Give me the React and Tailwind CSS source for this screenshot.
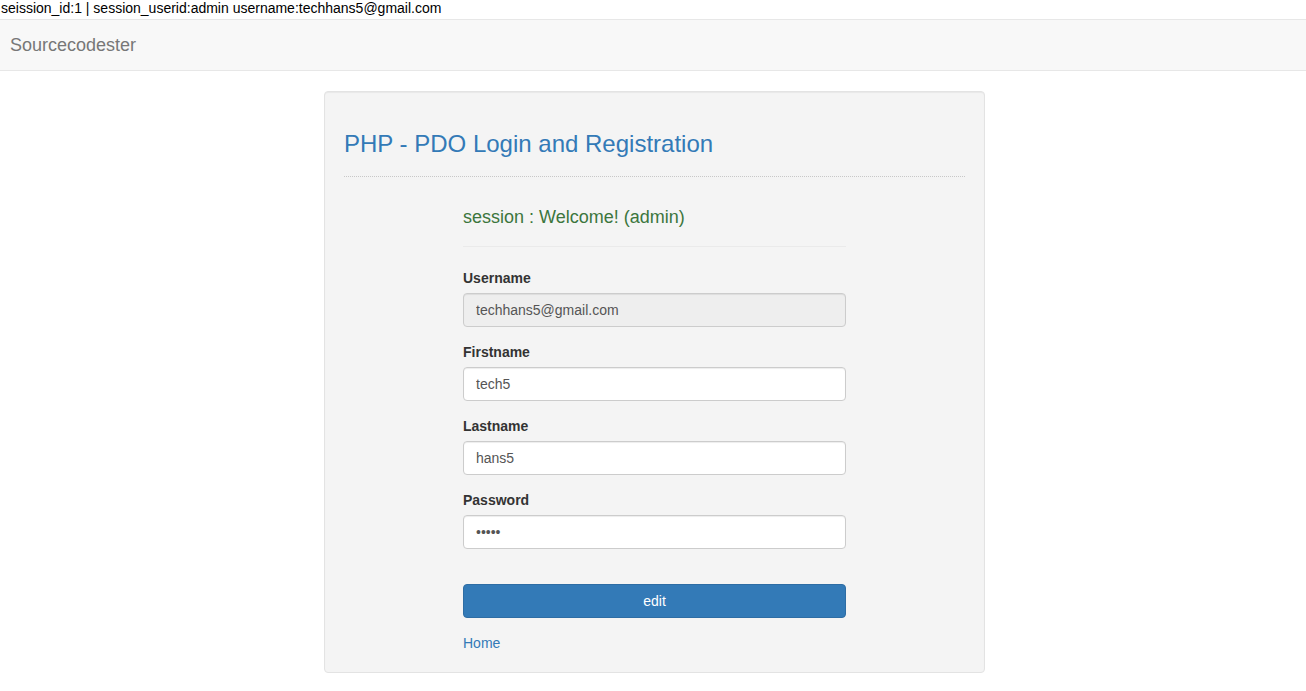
import React from 'react';

const inputBase =
  'block w-full h-[34px] px-3 text-[14px] text-[#555] border border-[#ccc] rounded-[4px] shadow-[inset_0_1px_1px_rgba(0,0,0,0.075)] outline-none';

function Field({ label, children }) {
  return (
    <div className="mb-[15px]">
      <label className="block mb-[5px] text-[14px] leading-[20px] font-bold text-[#333]">{label}</label>
      {children}
    </div>
  );
}

export default function App() {
  return (
    <div className="min-h-screen bg-white font-['Liberation_Sans',Arial,sans-serif] text-[14px] text-[#333]">
      {/* session debug line */}
      <div className="h-[19px] leading-[17px] pl-[1px] text-black">
        seission_id:1 | session_userid:admin username:techhans5@gmail.com
      </div>

      {/* navbar */}
      <nav className="h-[52px] bg-[#f8f8f8] border-y border-[#e7e7e7] flex items-center">
        <span className="pl-[10px] text-[18px] leading-[20px] text-[#777]">Sourcecodester</span>
      </nav>

      {/* well */}
      <div className="mt-[20px] ml-[324px] w-[661px] bg-[#f4f4f4] border border-[#e3e3e3] rounded-[4px] shadow-[inset_0_1px_1px_rgba(0,0,0,0.05)] p-[19px]">
        <h3 className="mt-[20px] text-[24px] leading-[26px] text-[#337ab7]">PHP - PDO Login and Registration</h3>
        <hr className="mt-[19px] border-0 border-t border-dotted border-[#c8c8c8]" />

        <div className="mx-[119px] pt-[30px]">
          <h4 className="text-[18px] leading-[20px] text-[#3c763d]">session : Welcome! (admin)</h4>
          <hr className="mt-[19px] mb-[21px] border-0 border-t border-[#eaeaea]" />

          <Field label="Username">
            <input className={inputBase + ' bg-[#eee]'} defaultValue="techhans5@gmail.com" readOnly />
          </Field>
          <Field label="Firstname">
            <input className={inputBase + ' bg-white'} defaultValue="tech5" />
          </Field>
          <Field label="Lastname">
            <input className={inputBase + ' bg-white'} defaultValue="hans5" />
          </Field>
          <Field label="Password">
            <input type="password" className={inputBase + ' bg-white'} defaultValue="hans5" />
          </Field>

          <button className="mt-[20px] w-full h-[34px] bg-[#337ab7] border border-[#2e6da4] rounded-[4px] text-white text-[14px]">
            edit
          </button>
          <div className="mt-[15px] leading-[20px]">
            <a href="#" className="text-[#337ab7]">Home</a>
          </div>
        </div>
      </div>
    </div>
  );
}
